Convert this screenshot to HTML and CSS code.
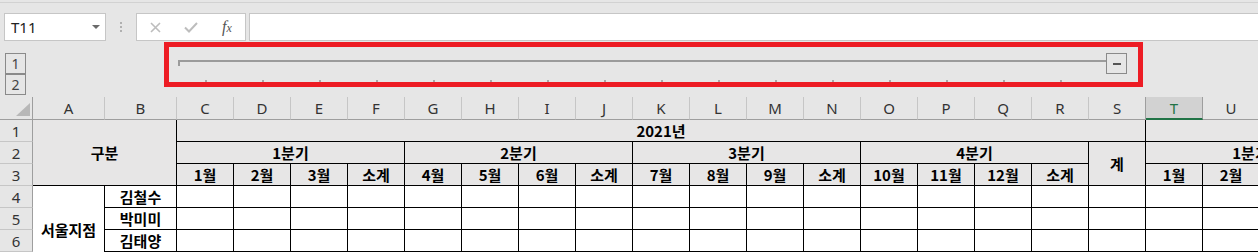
FILE: index.html
```html
<!DOCTYPE html>
<html lang="ko">
<head>
<meta charset="utf-8">
<title>Excel</title>
<link rel="stylesheet" href="styles.css">
</head>
<body>
<div class="topline"></div>
<div class="fbar">
  <div class="namebox"><span class="nb-text">T11</span><span class="nb-arrow"></span></div>
  <div class="dots"><span></span><span></span><span></span></div>
  <div class="fbtns">
    <svg class="ic-x" width="11" height="11" viewBox="0 0 11 11"><path d="M1 1L10 10M10 1L1 10" stroke="#bdbdbd" stroke-width="1.6" fill="none"/></svg>
    <svg class="ic-ok" width="14" height="11" viewBox="0 0 14 11"><path d="M1 5.5L5 9.5L13 1" stroke="#bdbdbd" stroke-width="2" fill="none"/></svg>
    <span class="fx"><span class="fx-f">f</span><span class="fx-x">x</span></span>
  </div>
  <div class="finput"></div>
</div>
<div class="outline">
  <div class="levels">
    <div class="lvl">1</div>
    <div class="lvl">2</div>
  </div>
  <div class="group">
    <div class="bar">
      <div class="bracket"></div>
      <div class="minus"><span class="dash"></span></div>
    </div>
    <div class="ticks">
      <span></span><span></span><span></span><span></span><span></span><span></span><span></span><span></span>
      <span></span><span></span><span></span><span></span><span></span><span></span><span></span><span></span>
    </div>
  </div>
</div>
<div class="redbox"></div>
<div class="sheet">
  <div class="corner"><span class="tri"></span></div>
  <div class="ch">A</div><div class="ch">B</div><div class="ch">C</div><div class="ch">D</div><div class="ch">E</div><div class="ch">F</div>
  <div class="ch">G</div><div class="ch">H</div><div class="ch">I</div><div class="ch">J</div><div class="ch">K</div><div class="ch">L</div>
  <div class="ch">M</div><div class="ch">N</div><div class="ch">O</div><div class="ch">P</div><div class="ch">Q</div><div class="ch">R</div>
  <div class="ch ch-pre">S</div><div class="ch ch-sel">T</div><div class="ch">U</div><div class="ch"></div><div class="ch"></div>

  <div class="rh">1</div>
  <div class="h c2 r3">구분</div>
  <div class="h c17">2021년</div>
  <div class="h c4"></div>

  <div class="rh">2</div>
  <div class="h c4">1분기</div>
  <div class="h c4">2분기</div>
  <div class="h c4">3분기</div>
  <div class="h c4">4분기</div>
  <div class="h r2">계</div>
  <div class="h c4 shift">1분기</div>

  <div class="rh">3</div>
  <div class="h">1월</div><div class="h">2월</div><div class="h">3월</div><div class="h">소계</div>
  <div class="h">4월</div><div class="h">5월</div><div class="h">6월</div><div class="h">소계</div>
  <div class="h">7월</div><div class="h">8월</div><div class="h">9월</div><div class="h">소계</div>
  <div class="h">10월</div><div class="h">11월</div><div class="h">12월</div><div class="h">소계</div>
  <div class="h">1월</div><div class="h">2월</div><div class="h"></div><div class="h"></div>

  <div class="rh">4</div>
  <div class="c b r4">서울지점</div>
  <div class="c b">김철수</div>
  <div class="c"></div><div class="c"></div><div class="c"></div><div class="c"></div><div class="c"></div><div class="c"></div><div class="c"></div>
  <div class="c"></div><div class="c"></div><div class="c"></div><div class="c"></div><div class="c"></div><div class="c"></div><div class="c"></div>
  <div class="c"></div><div class="c"></div><div class="c"></div><div class="c"></div><div class="c"></div><div class="c"></div><div class="c"></div>

  <div class="rh">5</div>
  <div class="c b">박미미</div>
  <div class="c"></div><div class="c"></div><div class="c"></div><div class="c"></div><div class="c"></div><div class="c"></div><div class="c"></div>
  <div class="c"></div><div class="c"></div><div class="c"></div><div class="c"></div><div class="c"></div><div class="c"></div><div class="c"></div>
  <div class="c"></div><div class="c"></div><div class="c"></div><div class="c"></div><div class="c"></div><div class="c"></div><div class="c"></div>

  <div class="rh">6</div>
  <div class="c b">김태양</div>
  <div class="c"></div><div class="c"></div><div class="c"></div><div class="c"></div><div class="c"></div><div class="c"></div><div class="c"></div>
  <div class="c"></div><div class="c"></div><div class="c"></div><div class="c"></div><div class="c"></div><div class="c"></div><div class="c"></div>
  <div class="c"></div><div class="c"></div><div class="c"></div><div class="c"></div><div class="c"></div><div class="c"></div><div class="c"></div>
</div>
</body>
</html>
```
FILE: styles.css
```css
* { box-sizing: border-box; }
html, body { margin: 0; padding: 0; }
body {
  width: 1258px;
  height: 252px;
  overflow: hidden;
  background: #e6e6e6;
  font-family: "Noto Sans", "Noto Sans CJK KR", sans-serif;
  color: #222;
  position: relative;
}

.topline {
  margin-top: 2px;
  height: 11px;
  border-top: 1px solid #d2d2d2;
}

/* formula bar */
.fbar {
  display: flex;
  height: 28px;
}
.namebox {
  margin-left: 4px;
  width: 102px;
  border: 1px solid #c6c6c6;
  background: #fff;
  display: flex;
  align-items: center;
  padding-left: 6px;
  font-size: 15px;
  color: #222;
}
.nb-arrow {
  margin-left: auto;
  margin-right: 5px;
  width: 0;
  height: 0;
  border-left: 4px solid transparent;
  border-right: 4px solid transparent;
  border-top: 4px solid #6a6a6a;
}
.dots {
  width: 30px;
  display: flex;
  flex-direction: column;
  align-items: center;
  justify-content: center;
  gap: 2px;
}
.dots span {
  width: 2px;
  height: 2px;
  background: #b0b0b0;
}
.fbtns {
  width: 110px;
  border: 1px solid #c6c6c6;
  background: #fff;
  display: flex;
  align-items: center;
  padding-left: 13px;
}
.ic-x { margin-right: 23px; }
.ic-ok { margin-right: 24px; }
.fx {
  font-family: "Liberation Serif", serif;
  font-style: italic;
  color: #555;
  display: flex;
  align-items: baseline;
}
.fx-f { font-size: 16px; }
.fx-x { font-size: 12px; }
.finput {
  margin-left: 3px;
  flex: 1;
  border: 1px solid #c6c6c6;
  border-right: none;
  background: #fff;
}

/* outline area */
.outline {
  height: 56px;
  display: flex;
}
.levels {
  margin-left: 5px;
  padding-top: 12px;
  display: flex;
  flex-direction: column;
}
.lvl {
  width: 21px;
  height: 21px;
  border: 1px solid #8a8a8a;
  display: flex;
  align-items: center;
  justify-content: center;
  font-size: 14px;
  color: #444;
}
.group {
  margin-left: 151px;
  width: 950px;
  padding-top: 12px;
}
.bar {
  display: flex;
  height: 21px;
}
.bracket {
  flex: 1;
  margin-left: 1px;
  margin-top: 7px;
  height: 6px;
  border-top: 2px solid #9b9b9b;
  border-left: 2px solid #9b9b9b;
}
.minus {
  width: 21px;
  height: 21px;
  border: 1px solid #8a8a8a;
  display: flex;
  align-items: center;
  justify-content: center;
}
.dash {
  width: 8px;
  height: 2px;
  background: #555;
}
.ticks {
  margin-top: 6px;
  display: grid;
  grid-template-columns: repeat(16, 57px);
}
.ticks span {
  justify-self: center;
  width: 2px;
  height: 3px;
  background: #a6a6a6;
}

.redbox {
  position: absolute;
  left: 164px;
  top: 42px;
  width: 979px;
  height: 45px;
  border: 5px solid #ed1c24;
}

/* sheet */
.sheet {
  display: grid;
  grid-template-columns: 33px 72px 72px repeat(21, 57px);
  grid-template-rows: 23px repeat(7, 22px);
  width: max-content;
}
.corner {
  background: #e6e6e6;
  border-right: 1px solid #9e9e9e;
  border-bottom: 1px solid #9e9e9e;
  display: flex;
  justify-content: flex-end;
  align-items: flex-end;
  padding: 0 2px 3px 0;
}
.tri {
  width: 0;
  height: 0;
  border-left: 14px solid transparent;
  border-bottom: 13px solid #b8b8b8;
}
.ch {
  background: #e6e6e6;
  border-right: 1px solid #c6c6c6;
  border-bottom: 1px solid #9e9e9e;
  display: flex;
  align-items: center;
  justify-content: center;
  font-size: 15px;
  color: #333;
}
.ch-pre { border-right-color: #9e9e9e; }
.ch-sel {
  background: #d2d2d2;
  border-right-color: #9e9e9e;
  border-bottom: 2px solid #217346;
  color: #217346;
}
.rh {
  background: #e6e6e6;
  border-right: 1px solid #9e9e9e;
  border-bottom: 1px solid #c6c6c6;
  display: flex;
  align-items: center;
  justify-content: center;
  font-size: 15px;
  color: #333;
}
.h, .c {
  border-right: 1px solid #000;
  border-bottom: 1px solid #000;
  display: flex;
  align-items: center;
  justify-content: center;
  font-family: "Noto Sans CJK KR", "Noto Sans", sans-serif;
  font-weight: bold;
  font-size: 15px;
  color: #000;
  white-space: nowrap;
  overflow: hidden;
}
.h { background: #e7e6e6; }
.c { background: #fff; }
.c2 { grid-column: span 2; }
.c4 { grid-column: span 4; }
.c17 { grid-column: span 17; }
.r2 { grid-row: span 2; }
.r3 { grid-row: span 3; }
.r4 { grid-row: span 4; }
.shift { padding-right: 18px; }
```
